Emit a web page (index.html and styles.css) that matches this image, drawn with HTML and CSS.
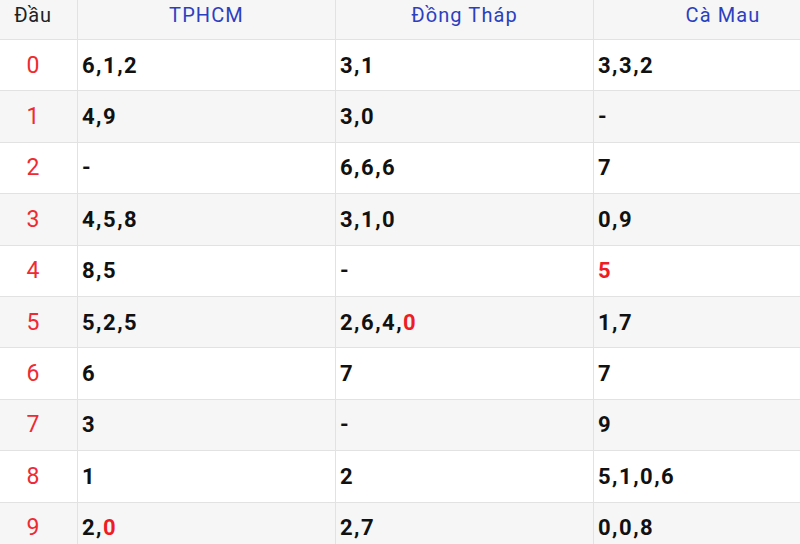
FILE: index.html
```html
<!DOCTYPE html>
<html lang="vi">
<head>
<meta charset="utf-8">
<title>Loto</title>
<link rel="stylesheet" href="styles.css">
</head>
<body>
<div class="table">
  <div class="row head">
    <div class="cell dau">Đầu</div>
    <div class="cell prov">TPHCM</div>
    <div class="cell prov">Đồng Tháp</div>
    <div class="cell prov">Cà Mau</div>
  </div>
  <div class="row">
    <div class="cell dau">0</div>
    <div class="cell num">6,1,2</div>
    <div class="cell num">3,1</div>
    <div class="cell num">3,3,2</div>
  </div>
  <div class="row alt">
    <div class="cell dau">1</div>
    <div class="cell num">4,9</div>
    <div class="cell num">3,0</div>
    <div class="cell num">-</div>
  </div>
  <div class="row">
    <div class="cell dau">2</div>
    <div class="cell num">-</div>
    <div class="cell num">6,6,6</div>
    <div class="cell num">7</div>
  </div>
  <div class="row alt">
    <div class="cell dau">3</div>
    <div class="cell num">4,5,8</div>
    <div class="cell num">3,1,0</div>
    <div class="cell num">0,9</div>
  </div>
  <div class="row">
    <div class="cell dau">4</div>
    <div class="cell num">8,5</div>
    <div class="cell num">-</div>
    <div class="cell num"><span class="hit">5</span></div>
  </div>
  <div class="row alt">
    <div class="cell dau">5</div>
    <div class="cell num">5,2,5</div>
    <div class="cell num">2,6,4,<span class="hit">0</span></div>
    <div class="cell num">1,7</div>
  </div>
  <div class="row">
    <div class="cell dau">6</div>
    <div class="cell num">6</div>
    <div class="cell num">7</div>
    <div class="cell num">7</div>
  </div>
  <div class="row alt">
    <div class="cell dau">7</div>
    <div class="cell num">3</div>
    <div class="cell num">-</div>
    <div class="cell num">9</div>
  </div>
  <div class="row">
    <div class="cell dau">8</div>
    <div class="cell num">1</div>
    <div class="cell num">2</div>
    <div class="cell num">5,1,0,6</div>
  </div>
  <div class="row alt">
    <div class="cell dau">9</div>
    <div class="cell num">2,<span class="hit">0</span></div>
    <div class="cell num">2,7</div>
    <div class="cell num">0,0,8</div>
  </div>
</div>
</body>
</html>
```
FILE: styles.css
```css
html, body {
  margin: 0;
  padding: 0;
  background: #ffffff;
  overflow: hidden;
}
body {
  font-family: Roboto, "Liberation Sans", Arial, sans-serif;
  width: 800px;
  height: 544px;
}
.table {
  width: 852px;
}
.row {
  display: grid;
  grid-template-columns: 77px 258px 258px 259px;
  height: 50.4px;
  border-bottom: 1px solid #e2e2e2;
  background: #ffffff;
}
.row.alt {
  background: #f6f6f6;
}
.row.head {
  height: 39px;
  background: #f6f6f6;
}
.cell {
  display: flex;
  align-items: center;
  font-size: 22px;
  color: #111111;
}
.cell + .cell {
  border-left: 1px solid #e2e2e2;
}
.dau {
  justify-content: center;
  padding-right: 11px;
  color: #ee2a33;
  font-size: 23px;
}
.head .cell {
  align-items: flex-start;
  padding-top: 3px;
  font-size: 20px;
  letter-spacing: 1.1px;
}
.head .dau {
  color: #222222;
  letter-spacing: 0.8px;
}
.prov {
  justify-content: center;
  color: #2b3fc1;
}
.num {
  font-weight: bold;
  padding-left: 4px;
  letter-spacing: 1.5px;
}
.hit {
  color: #ee1c25;
}
```
